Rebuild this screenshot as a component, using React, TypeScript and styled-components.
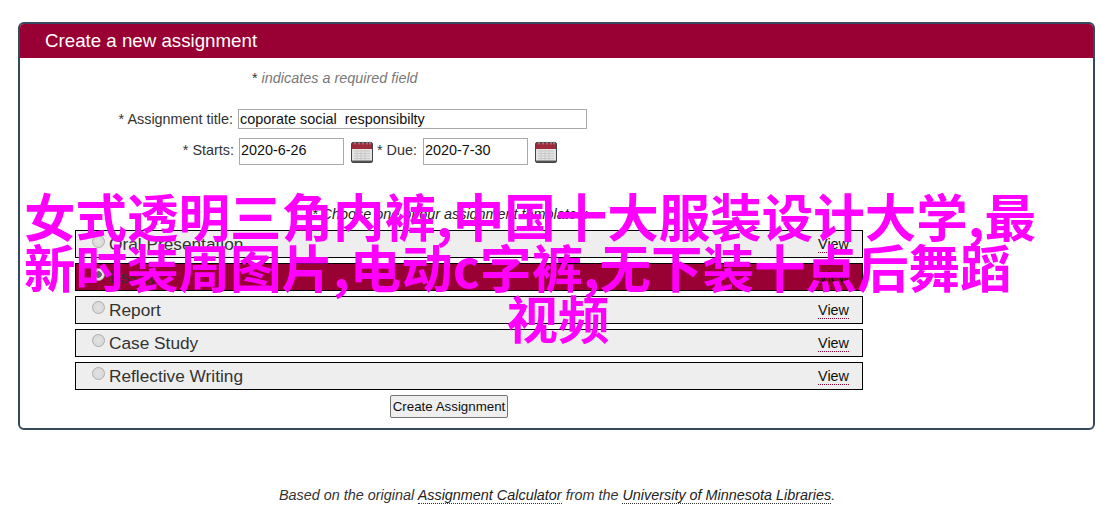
import React from "react";
import styled, { createGlobalStyle } from "styled-components";

const Global = createGlobalStyle`
  html, body { margin: 0; padding: 0; background: #fff; }
  body { font-family: "Liberation Sans", Arial, sans-serif; color: #333; }
`;

const Page = styled.div`
  position: relative;
  width: 1116px;
  height: 526px;
  padding: 22px 21px 0 18px;
  box-sizing: border-box;
  overflow: hidden;
`;

const Panel = styled.section`
  height: 408px;
  box-sizing: border-box;
  border: 2px solid #34495e;
  border-radius: 6px;
  overflow: hidden;
  display: flex;
  flex-direction: column;
`;

const Header = styled.h1`
  margin: 0;
  height: 34px;
  flex: none;
  padding-left: 25px;
  background: #990033;
  color: #fff;
  font-size: 18.72px;
  font-weight: 400;
  line-height: 34px;
`;

const Body = styled.div`
  display: flex;
  flex-direction: column;
  align-items: flex-start;
  padding: 12px 0 0 55px;
`;

const Required = styled.p`
  margin: 0 0 0 177px;
  font-size: 14.4px;
  line-height: 16px;
  color: #333;
  em { color: #777; }
`;

const FieldRow = styled.div`
  display: flex;
  align-items: center;
  margin-top: ${(p) => p.$top}px;
  height: ${(p) => p.$height}px;
`;

const Label = styled.label`
  font-size: 14.4px;
  color: #333;
  text-align: right;
  white-space: pre;
  width: ${(p) => p.$width || "auto"};
  margin-right: ${(p) => p.$gap || 5}px;
  margin-bottom: ${(p) => p.$lift || 0}px;
  flex: none;
`;

const TitleInput = styled.input`
  box-sizing: border-box;
  width: 349px;
  height: 20px;
  border: 1px solid #aaa;
  padding: 0 1px;
  font: 14.4px "Liberation Sans", Arial, sans-serif;
  color: #111;
  margin: 0;
`;

const DateInput = styled.input`
  box-sizing: border-box;
  width: 105px;
  height: 27px;
  border: 1px solid #aaa;
  padding: 0 1px 3px;
  font: 14.4px "Liberation Sans", Arial, sans-serif;
  color: #111;
  margin: 0;
`;

const CalendarWrap = styled.span`
  display: inline-flex;
  width: 22px;
  height: 22px;
  margin: 1px 4px 0 7px;
  flex: none;
`;

const Templates = styled.fieldset`
  border: 0;
  margin: 41px 0 0 0;
  padding: 0;
  width: 788px;
  display: flex;
  flex-direction: column;
  gap: 5px;
`;

const Legend = styled.p`
  margin: 0 0 3px 0;
  padding-left: 237px;
  font-size: 14.4px;
  line-height: 16px;
  font-style: italic;
  color: #222;
`;

const Row = styled.label`
  box-sizing: border-box;
  height: 28px;
  border: 1px solid #000;
  background: ${(p) => (p.$active ? "#990033" : "#eee")};
  display: flex;
  align-items: center;
  padding: 0 13px 0 16px;
  font-size: 17.28px;
  color: #333;
`;

const Radio = styled.input`
  appearance: none;
  box-sizing: border-box;
  margin: 0 4px 5px 0;
  width: 13px;
  height: 13px;
  flex: none;
  border-radius: 50%;
  border: 1px solid #adadad;
  background: radial-gradient(circle at 50% 50%, #e2e2e2 0, #d6d6d6 100%);
  &:checked {
    background: radial-gradient(circle at 50% 50%, #666 0, #666 3px, #e4e4e4 3.6px);
  }
`;

const RowName = styled.span`
  flex: 1;
`;

const ViewLink = styled.a`
  font-size: 14.4px;
  color: #111;
  text-decoration: none;
  border-bottom: 1px dotted #990033;
  line-height: 15px;
  margin-top: 2px;
`;

const Submit = styled.button`
  box-sizing: border-box;
  align-self: flex-start;
  margin: 5px 0 0 315px;
  width: 118px;
  height: 23px;
  padding: 0;
  font: 13.33px "Liberation Sans", Arial, sans-serif;
  color: #111;
  background: #efefef;
  border: 1px solid #767676;
  border-radius: 2px;
`;

const Footer = styled.p`
  margin: 57px 0 0 261px;
  font-size: 14.4px;
  line-height: 16px;
  font-style: italic;
  color: #333;
  a {
    color: #222;
    text-decoration: none;
    border-bottom: 1px dotted #333;
  }
`;

const Overlay = styled.div`
  position: absolute;
  left: 0;
  top: 189px;
  width: 1116px;
  font-family: "Noto Sans CJK SC", sans-serif;
  font-weight: 700;
  font-size: 51.5px;
  line-height: 51px;
  color: #ff00ff;
  white-space: nowrap;
  pointer-events: none;
`;

const OverlayLine = styled.div`
  padding-left: ${(p) => (p.$center ? 0 : 24)}px;
  text-align: ${(p) => (p.$center ? "center" : "left")};
`;

const Calendar = () => (
  <CalendarWrap>
    <svg width="22" height="22" viewBox="0 0 22 22">
      <rect x="0.5" y="1.5" width="21" height="20" rx="1.5" fill="#e4e4e4" stroke="#444" />
      <rect x="1" y="2" width="20" height="6" fill="#9c2a3a" />
      <path d="M4 0.5v3M8 0.5v3M12 0.5v3M16 0.5v3M19 0.5v3" stroke="#aaa" strokeWidth="1" />
      <path d="M3 10h16M3 12.5h16M3 15h16M3 17.5h16M6 9v10M10 9v10M14 9v10" stroke="#c8c8c8" strokeWidth="1" />
      <rect x="1" y="19.5" width="20" height="1.5" fill="#555" />
    </svg>
  </CalendarWrap>
);

const rows = ["Oral Presentation", "Essay", "Report", "Case Study", "Reflective Writing"];

export default function App() {
  return (
    <Page>
      <Global />
      <Panel>
        <Header>Create a new assignment</Header>
        <Body>
          <Required>* <em>indicates a required field</em></Required>
          <FieldRow $top={23} $height={20}>
            <Label $width="158px">* Assignment title:</Label>
            <TitleInput readOnly value="coporate social  responsibilty" />
          </FieldRow>
          <FieldRow $top={9} $height={27}>
            <Label $width="159px" $lift={3}>* Starts:</Label>
            <DateInput readOnly value="2020-6-26" />
            <Calendar />
            <Label $gap={6} $lift={3}>* Due:</Label>
            <DateInput readOnly value="2020-7-30" />
            <Calendar />
          </FieldRow>
          <Templates>
            <Legend>* Choose one of our assignment templates:</Legend>
            {rows.map((name) => (
              <Row key={name} $active={name === "Essay"}>
                <Radio type="radio" name="template" readOnly checked={name === "Essay"} />
                <RowName>{name}</RowName>
                <ViewLink>View</ViewLink>
              </Row>
            ))}
          </Templates>
          <Submit>Create Assignment</Submit>
        </Body>
      </Panel>
      <Footer>
        Based on the original <a>Assignment Calculator</a> from the <a>University of Minnesota Libraries</a>.
      </Footer>
      <Overlay>
        <OverlayLine>女式透明三角内裤,中国十大服装设计大学,最</OverlayLine>
        <OverlayLine>新时装周图片,电动c字裤,无下装十点后舞蹈</OverlayLine>
        <OverlayLine $center>视频</OverlayLine>
      </Overlay>
    </Page>
  );
}
